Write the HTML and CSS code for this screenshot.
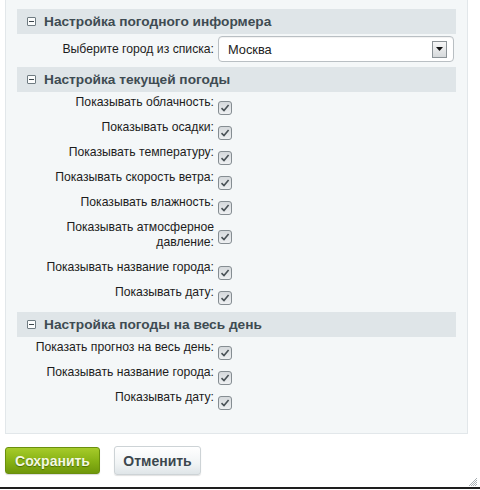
FILE: index.html
```html
<!DOCTYPE html>
<html lang="ru">
<head>
<meta charset="utf-8">
<title>Настройки погоды</title>
<link rel="stylesheet" href="styles.css">
</head>
<body>
<div class="panel">
  <div class="sec-head"><span class="toggle"></span>Настройка погодного информера</div>
  <div class="row row-select">
    <label class="lbl">Выберите город из списка:</label>
    <div class="select">
      <span class="sel-val">Москва</span>
      <span class="sel-btn"><svg width="7" height="4" viewBox="0 0 7 4"><path d="M0 0H7L3.5 4Z" fill="#111"/></svg></span>
    </div>
  </div>

  <div class="sec-head"><span class="toggle"></span>Настройка текущей погоды</div>
  <div class="rows">
    <div class="row"><label class="lbl">Показывать облачность:</label><span class="cb"></span></div>
    <div class="row"><label class="lbl">Показывать осадки:</label><span class="cb"></span></div>
    <div class="row"><label class="lbl">Показывать температуру:</label><span class="cb"></span></div>
    <div class="row"><label class="lbl">Показывать скорость ветра:</label><span class="cb"></span></div>
    <div class="row"><label class="lbl">Показывать влажность:</label><span class="cb"></span></div>
    <div class="row row-2"><label class="lbl">Показывать атмосферное давление:</label><span class="cb"></span></div>
    <div class="row"><label class="lbl">Показывать название города:</label><span class="cb"></span></div>
    <div class="row"><label class="lbl">Показывать дату:</label><span class="cb"></span></div>
  </div>

  <div class="sec-head"><span class="toggle"></span>Настройка погоды на весь день</div>
  <div class="rows rows-last">
    <div class="row"><label class="lbl">Показать прогноз на весь день:</label><span class="cb"></span></div>
    <div class="row"><label class="lbl">Показывать название города:</label><span class="cb"></span></div>
    <div class="row"><label class="lbl">Показывать дату:</label><span class="cb"></span></div>
  </div>
</div>

<div class="buttons">
  <button class="btn btn-save">Сохранить</button>
  <button class="btn btn-cancel">Отменить</button>
</div>

<div class="frame-bottom">
  <svg class="grip" width="10" height="10" viewBox="0 0 10 10">
    <path d="M9 1L1 9M9 3L3 9M9 5L5 9M9 7L7 9" stroke="#a9b0b4" stroke-width="1"/>
  </svg>
</div>
</body>
</html>
```

FILE: styles.css
```css
* { box-sizing: border-box; }

html, body {
  margin: 0;
  padding: 0;
  background: #ffffff;
}

body {
  width: 480px;
  height: 490px;
  position: relative;
  font-family: "Liberation Sans", Arial, sans-serif;
  font-size: 12.2px;
  color: #1a1a1a;
  overflow: hidden;
}

.panel {
  margin-left: 5px;
  width: 463px;
  background: #f4f7f8;
  border: 1px solid #e2e7ea;
  border-top: none;
  padding: 9px 11px 21px 11px;
}

.sec-head {
  height: 25px;
  background: #dfe5e8;
  display: flex;
  align-items: center;
  padding-left: 10px;
  font-weight: bold;
  font-size: 13.7px;
  color: #3e4b52;
}

.toggle {
  width: 9px;
  height: 9px;
  border: 1px solid #6f7b81;
  border-radius: 1px;
  background: #fbfcfc;
  margin-right: 8px;
  position: relative;
  flex: none;
}
.toggle::after {
  content: "";
  position: absolute;
  left: 1px;
  right: 1px;
  top: 3px;
  height: 1px;
  background: #3b464c;
}

.row {
  display: grid;
  grid-template-columns: 197px 1fr;
  column-gap: 4px;
  align-items: start;
  height: 25px;
  padding-top: 3px;
}

.lbl {
  text-align: right;
  line-height: 15px;
  color: #1c1c1c;
}

.row-select {
  align-items: center;
  height: 33px;
  padding: 2px 0 5px;
}

.row-2 { height: 40px; }

.rows { margin-bottom: 5px; }
.rows-last { margin-bottom: 0; }

.select {
  width: 236px;
  height: 26px;
  background: #ffffff;
  border: 1px solid #b9bfc3;
  border-radius: 4px;
  box-shadow: inset 0 1px 1px rgba(0,0,0,0.06);
  display: flex;
  align-items: center;
  justify-content: space-between;
  padding: 0 6px 0 9px;
}

.sel-val {
  font-size: 12.8px;
  color: #222;
}

.sel-btn {
  width: 15px;
  height: 17px;
  border: 1px solid #8c9397;
  background: linear-gradient(#f7f7f7, #d6d9db);
  display: flex;
  align-items: center;
  justify-content: center;
}

.cb {
  width: 14px;
  height: 14px;
  margin-top: 6px;
  border: 1px solid #858d92;
  border-radius: 3px;
  background-color: #dfe3e5;
  background-image: url("data:image/svg+xml;utf8,<svg xmlns='http://www.w3.org/2000/svg' width='12' height='12' viewBox='0 0 12 12'><path d='M2.5 6.2L5 8.6L9.6 3' fill='none' stroke='%234a5257' stroke-width='1.6'/></svg>"), linear-gradient(#d5d9dc, #eef0f2);
  background-repeat: no-repeat;
  background-position: center;
}

.row-2 .cb { margin-top: 10px; }

.buttons {
  display: flex;
  align-items: center;
  gap: 14px;
  margin-top: 12px;
  padding-left: 5px;
}

.btn {
  font-family: "Liberation Sans", Arial, sans-serif;
  font-size: 14px;
  font-weight: bold;
  border-radius: 3px;
  cursor: pointer;
  padding: 0;
}

.btn-save {
  width: 95px;
  height: 27px;
  color: #f4f8e2;
  text-shadow: 0 1px 1px #4d6c05;
  background: linear-gradient(#a6cb2a, #86b114 55%, #6f970b);
  border: 1px solid #6a8f0d;
  box-shadow: 0 1px 1px rgba(0,0,0,0.15);
}

.btn-cancel {
  width: 87px;
  height: 29px;
  color: #3c474d;
  background: linear-gradient(#ffffff, #f1f4f5 60%, #dfe5e8);
  border: 1px solid #cdd3d6;
  box-shadow: 0 1px 1px rgba(0,0,0,0.12);
}

.frame-bottom {
  margin-top: 12px;
  height: 2px;
  background: #1e1e1e;
  position: relative;
}

.grip {
  position: absolute;
  right: 2px;
  bottom: 2px;
}
```
